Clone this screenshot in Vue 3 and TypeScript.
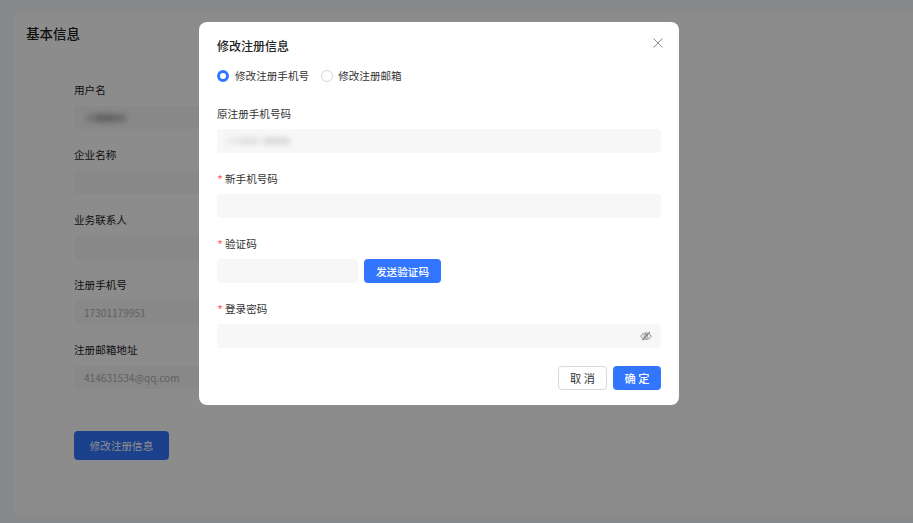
<script setup lang="ts">
const bgFields = [
  { label: '用户名', value: '', blur: true },
  { label: '企业名称', value: '' },
  { label: '业务联系人', value: '' },
  { label: '注册手机号', value: '17301179951' },
  { label: '注册邮箱地址', value: '414631534@qq.com' },
]
</script>

<template>
  <div class="page">
    <section class="card">
      <h2 class="card-title">基本信息</h2>
      <div class="bg-form">
        <div v-for="f in bgFields" :key="f.label" class="bg-item">
          <div class="bg-label">{{ f.label }}</div>
          <div class="bg-input">
            <span v-if="f.blur" class="smudge smudge-a"></span>
            {{ f.value }}
          </div>
        </div>
        <button class="bg-btn" type="button">修改注册信息</button>
      </div>
    </section>

    <div class="mask">
      <div class="modal">
        <svg class="close" viewBox="0 0 10 10" width="10" height="10" aria-hidden="true">
          <path d="M.5.5l9 9M9.500.5l-9 9" fill="none" stroke="#8c8c8c" stroke-width="1" />
        </svg>
        <h3 class="modal-title">修改注册信息</h3>
        <div class="radios">
          <label class="radio"><span class="dot on"></span>修改注册手机号</label>
          <label class="radio"><span class="dot"></span>修改注册邮箱</label>
        </div>

        <div class="item">
          <div class="label">原注册手机号码</div>
          <div class="input"><span class="smudge smudge-b"></span></div>
        </div>
        <div class="item">
          <div class="label"><i class="req">*</i>新手机号码</div>
          <div class="input"></div>
        </div>
        <div class="item">
          <div class="label"><i class="req">*</i>验证码</div>
          <div class="code-row">
            <div class="input code"></div>
            <button class="btn primary send" type="button">发送验证码</button>
          </div>
        </div>
        <div class="item">
          <div class="label"><i class="req">*</i>登录密码</div>
          <div class="input pwd">
            <svg viewBox="0 0 12 12" width="12" height="12" aria-hidden="true">
              <path d="M.7 6.200C2 4.100 3.900 3 6 3s4 1.100 5.300 3.200C10 8.300 8.100 9.400 6 9.400S2 8.300.7 6.200Z" fill="none" stroke="#8a8a8a" stroke-width="1" />
              <circle cx="6" cy="6.200" r="1.900" fill="none" stroke="#8a8a8a" stroke-width="1" />
              <path d="M2.300 10.200 9.900 1.800" fill="none" stroke="#7d7d7d" stroke-width="1.100" />
            </svg>
          </div>
        </div>

        <div class="footer">
          <button class="btn ghost" type="button">取 消</button>
          <button class="btn primary ok" type="button">确 定</button>
        </div>
      </div>
    </div>
  </div>
</template>

<style>
html, body { margin: 0; background: #f5f7fa; }
</style>

<style scoped>
.page {
  height: 523px;
  box-sizing: border-box;
  padding: 13px 0 8px 14px;
  overflow: hidden;
  font-family: "Noto Sans CJK SC", "Noto Sans", sans-serif;
  color: #1c1c1c;
}
.card {
  height: 100%;
  background: #fff;
  box-sizing: border-box;
  padding: 11px 12px;
}
.card-title {
  margin: 0 0 40px;
  font-size: 13.500px;
  line-height: 18px;
  font-weight: 500;
}
.bg-form { padding-left: 48px; }
.bg-item { height: 65px; }
.bg-label { font-size: 10.600px; line-height: 16px; margin-bottom: 8px; }
.bg-input {
  width: 420px;
  height: 23px;
  line-height: 23px;
  padding-left: 10px;
  box-sizing: border-box;
  border-radius: 4px;
  background: #f7f7f7;
  color: #b2b2b2;
  font-size: 10.100px;
  position: relative;
}
.bg-btn {
  display: block;
  margin-top: 24px;
  width: 95px;
  height: 29px;
  border: 0;
  border-radius: 4px;
  background: #3276ff;
  color: #fff;
  font: inherit;
  font-size: 10.600px;
  padding: 0;
}
.smudge {
  position: absolute;
  top: 50%;
  height: 8px;
  margin-top: -4px;
  border-radius: 3px;
  filter: blur(2.500px);
}
.smudge-a {
  left: 12px;
  width: 40px;
  background: linear-gradient(90deg, #d4d4d4 0 25%, #b4b4b4 25% 70%, #c4c4c4 70% 100%);
}
.smudge-b {
  left: 9px;
  width: 64px;
  background: linear-gradient(90deg, #ececec 0 20%, #e2e2e2 20% 50%, #f0f0f0 50% 60%, #dcdcdc 60% 100%);
}
.mask {
  position: fixed;
  inset: 0;
  background: rgba(0, 0, 0, 0.45);
}
.modal {
  position: absolute;
  left: 199px;
  top: 22px;
  width: 480px;
  height: 383px;
  box-sizing: border-box;
  padding: 15px 18px 15px;
  background: #fff;
  border-radius: 8px;
}
.close { position: absolute; top: 16px; right: 16px; }
.modal-title {
  margin: 0;
  font-size: 12px;
  line-height: 17px;
  font-weight: 500;
  color: #222;
}
.radios {
  display: flex;
  gap: 12px;
  margin-top: 14px;
  height: 16px;
  margin-bottom: 22px;
}
.radio {
  display: flex;
  align-items: center;
  font-size: 10.600px;
  line-height: 16px;
  color: #333;
}
.dot {
  width: 12px;
  height: 12px;
  box-sizing: border-box;
  margin-right: 6px;
  border: 1px solid #d9d9d9;
  border-radius: 50%;
  background: #fff;
}
.radio + .radio .dot { margin-right: 5px; }
.dot.on { border: 3.500px solid #3276ff; }
.item { height: 65px; }
.label {
  font-size: 10.600px;
  line-height: 16px;
  height: 16px;
  margin-bottom: 7px;
  color: #333;
}
.req {
  display: inline-block;
  width: 8px;
  font-style: normal;
  font-size: 13px;
  line-height: 16px;
  vertical-align: -2px;
  color: #ff6b6e;
}
.input {
  height: 24px;
  border-radius: 4px;
  background: #f7f7f7;
  position: relative;
}
.code-row { display: flex; gap: 6px; }
.code { width: 141px; }
.pwd {
  display: flex;
  align-items: center;
  justify-content: flex-end;
  padding-right: 9px;
}
.btn {
  height: 24px;
  padding: 0;
  box-sizing: border-box;
  border-radius: 4px;
  font: inherit;
  font-size: 10.600px;
}
.primary { border: 0; background: #3276ff; color: #fff; font-weight: 500; }
.send { width: 77px; }
.footer {
  display: flex;
  justify-content: flex-end;
  gap: 6px;
  margin-top: 0;
}
.ghost, .ok { font-size: 11.200px; }
.ghost { width: 49px; border: 1px solid #d9d9d9; background: #fff; color: #333; }
.ok { width: 48px; }
</style>
